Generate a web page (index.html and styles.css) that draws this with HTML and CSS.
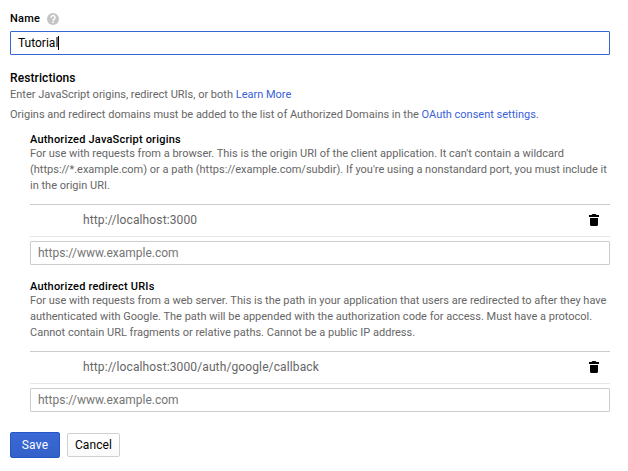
FILE: index.html
```html
<!DOCTYPE html>
<html lang="en">
<head>
<meta charset="utf-8">
<title>OAuth client</title>
<link rel="stylesheet" href="styles.css">
</head>
<body>
<main class="form">
  <div class="label">Name <svg class="help" viewBox="0 0 12 12"><circle cx="6" cy="6" r="6"/><path d="M4 4.7a2 2 0 1 1 3 1.6C6.3 6.8 6 7 6 7.7M6 8.6v1.4"/></svg></div>
  <div class="name-input">Tutorial<span class="caret"></span></div>
  <h1>Restrictions</h1>
  <p class="intro">Enter JavaScript origins, redirect URIs, or both <a>Learn More</a></p>
  <p class="intro second">Origins and redirect domains must be added to the list of Authorized Domains in the <a>OAuth consent settings</a>.</p>
  <section>
    <h2>Authorized JavaScript origins</h2>
    <p>For use with requests from a browser. This is the origin URI of the client application. It can't contain a wildcard<br>(https://*.example.com) or a path (https://example.com/subdir). If you're using a nonstandard port, you must include it<br>in the origin URI.</p>
    <div class="row"><span>http://localhost:3000</span><svg class="trash" viewBox="0 0 10 12"><path d="M0 1h2.5L3.5 0h3l1 1H10v2H0zM1 4h8v6.5Q9 12 7.5 12h-5Q1 12 1 10.5z"/></svg></div>
    <div class="uri-input">https://www.example.com</div>
  </section>
  <section>
    <h2>Authorized redirect URIs</h2>
    <p>For use with requests from a web server. This is the path in your application that users are redirected to after they have<br>authenticated with Google. The path will be appended with the authorization code for access. Must have a protocol.<br>Cannot contain URL fragments or relative paths. Cannot be a public IP address.</p>
    <div class="row"><span>http://localhost:3000/auth/google/callback</span><svg class="trash" viewBox="0 0 10 12"><path d="M0 1h2.5L3.5 0h3l1 1H10v2H0zM1 4h8v6.5Q9 12 7.5 12h-5Q1 12 1 10.5z"/></svg></div>
    <div class="uri-input">https://www.example.com</div>
  </section>
  <div class="actions"><button class="save">Save</button><button class="cancel">Cancel</button></div>
</main>
</body>
</html>
```
FILE: styles.css
```css
* { box-sizing: border-box; }
body { margin: 0; background: #fff; font: 11px/16px Roboto, sans-serif; color: #666; }
.form { width: 600px; margin-left: 10px; padding-top: 11px; }
h1, h2, p { margin: 0; }
.label { display: flex; align-items: center; gap: 7px; height: 16px; font-weight: 500; letter-spacing: .2px; color: #000; }
.help { width: 12px; height: 12px; fill: #c4c4c4; }
.help path { fill: none; stroke: #fff; stroke-width: 1.5; }
.name-input { display: flex; align-items: center; height: 24px; margin-top: 4px; padding-left: 7px; border: 1px solid #3367d6; border-radius: 1px; font-size: 12px; color: #000; }
.caret { width: 1px; height: 14px; background: #000; }
h1 { margin: 15px 0 1px; font-size: 12px; line-height: 16px; font-weight: 500; letter-spacing: .1px; color: #000; }
h2 { margin-bottom: -1px; font-size: 11px; line-height: 14px; font-weight: 500; letter-spacing: .2px; color: #000; }
.intro.second { margin-top: 4px; }
a { color: #3b5fd9; }
section { margin: 10px 0 0 20px; height: 137px; }
.row { display: flex; align-items: center; justify-content: space-between; height: 33px; margin-top: 10px; padding: 0 11px 2px 53px; border-top: 1px solid #ccc; border-bottom: 1px solid #e6e6e6; font-size: 12px; letter-spacing: .12px; }
.trash { width: 10px; height: 12px; fill: #000; }
.uri-input { height: 24px; margin-top: 4px; padding-left: 7px; border: 1px solid #ccc; border-radius: 1px; font-size: 12px; line-height: 22px; color: #757575; }
.actions { display: flex; align-items: center; gap: 7px; margin-top: 15px; }
button { margin: 0; padding: 0; font: 12px Roboto, sans-serif; border-radius: 2px; }
.save { width: 50px; height: 26px; border: 1px solid #2257c5; background: linear-gradient(#3b69d6, #3360c8); color: #fff; letter-spacing: .2px; }
.cancel { width: 53px; height: 24px; border: 1px solid #d0d0d0; background: linear-gradient(#fff, #fafafa); color: #000; letter-spacing: .1px; }
```
